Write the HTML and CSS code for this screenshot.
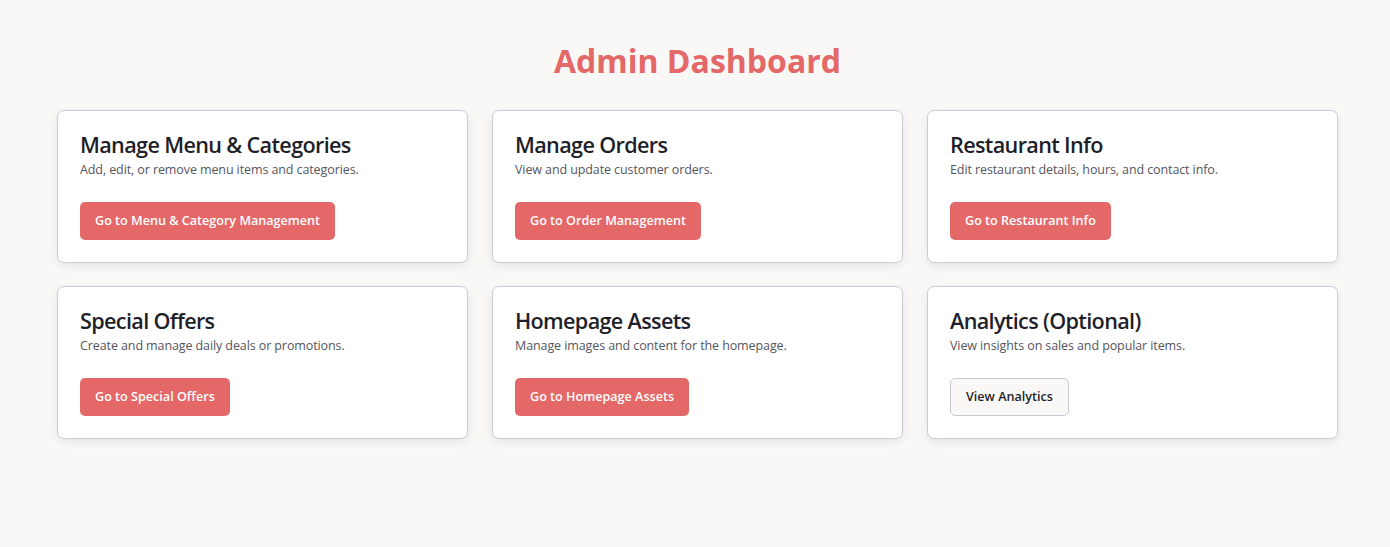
FILE: index.html
```html
<!DOCTYPE html>
<html lang="en">
<head>
<meta charset="utf-8">
<title>Admin Dashboard</title>
<link rel="stylesheet" href="styles.css">
</head>
<body>
<main class="page">
  <h1 class="page-title">Admin Dashboard</h1>
  <div class="grid">
    <section class="card">
      <h2 class="card-title">Manage Menu &amp; Categories</h2>
      <p class="card-text">Add, edit, or remove menu items and categories.</p>
      <a class="btn btn-primary" href="#">Go to Menu &amp; Category Management</a>
    </section>
    <section class="card">
      <h2 class="card-title">Manage Orders</h2>
      <p class="card-text">View and update customer orders.</p>
      <a class="btn btn-primary" href="#">Go to Order Management</a>
    </section>
    <section class="card">
      <h2 class="card-title">Restaurant Info</h2>
      <p class="card-text">Edit restaurant details, hours, and contact info.</p>
      <a class="btn btn-primary" href="#">Go to Restaurant Info</a>
    </section>
    <section class="card">
      <h2 class="card-title">Special Offers</h2>
      <p class="card-text">Create and manage daily deals or promotions.</p>
      <a class="btn btn-primary" href="#">Go to Special Offers</a>
    </section>
    <section class="card">
      <h2 class="card-title">Homepage Assets</h2>
      <p class="card-text">Manage images and content for the homepage.</p>
      <a class="btn btn-primary" href="#">Go to Homepage Assets</a>
    </section>
    <section class="card">
      <h2 class="card-title">Analytics (Optional)</h2>
      <p class="card-text">View insights on sales and popular items.</p>
      <a class="btn btn-outline" href="#">View Analytics</a>
    </section>
  </div>
</main>
</body>
</html>
```
FILE: styles.css
```css
* { box-sizing: border-box; }
html, body { margin: 0; padding: 0; }
body {
  background: #faf8f6;
  font-family: "Open Sans", "Noto Sans", sans-serif;
  color: #1f1f29;
}
.page {
  padding: 37px 52px 40px 57px;
}
.page-title {
  margin: 0 0 25px;
  text-align: center;
  font-size: 32px;
  font-weight: 700;
  line-height: 48px;
  color: #e46868;
}
.grid {
  display: grid;
  grid-template-columns: repeat(3, 1fr);
  gap: 23px 24px;
}
.card {
  background: #fff;
  border: 1px solid #cbcad8;
  border-radius: 7px;
  box-shadow: 0 3px 10px rgba(0, 0, 0, 0.08);
  padding: 20px 22px 22px;
  height: 153px;
}
.card-title {
  margin: 0;
  font-size: 21.6px;
  font-weight: 600;
  letter-spacing: -0.65px;
  line-height: 28px;
  color: #1f1f29;
}
.card-text {
  margin: 2px 0 0;
  font-size: 12.5px;
  letter-spacing: -0.1px;
  line-height: 18px;
  color: #555560;
}
.btn {
  display: inline-block;
  margin-top: 23px;
  padding: 0 15px;
  height: 38px;
  line-height: 38px;
  font-size: 12.6px;
  font-weight: 600;
  border-radius: 5px;
  text-decoration: none;
}
.btn-primary {
  background: #e46868;
  color: #fff;
}
.btn-outline {
  background: #faf8f6;
  color: #1f1f29;
  border: 1px solid #c9c8d2;
  line-height: 36px;
}
```
